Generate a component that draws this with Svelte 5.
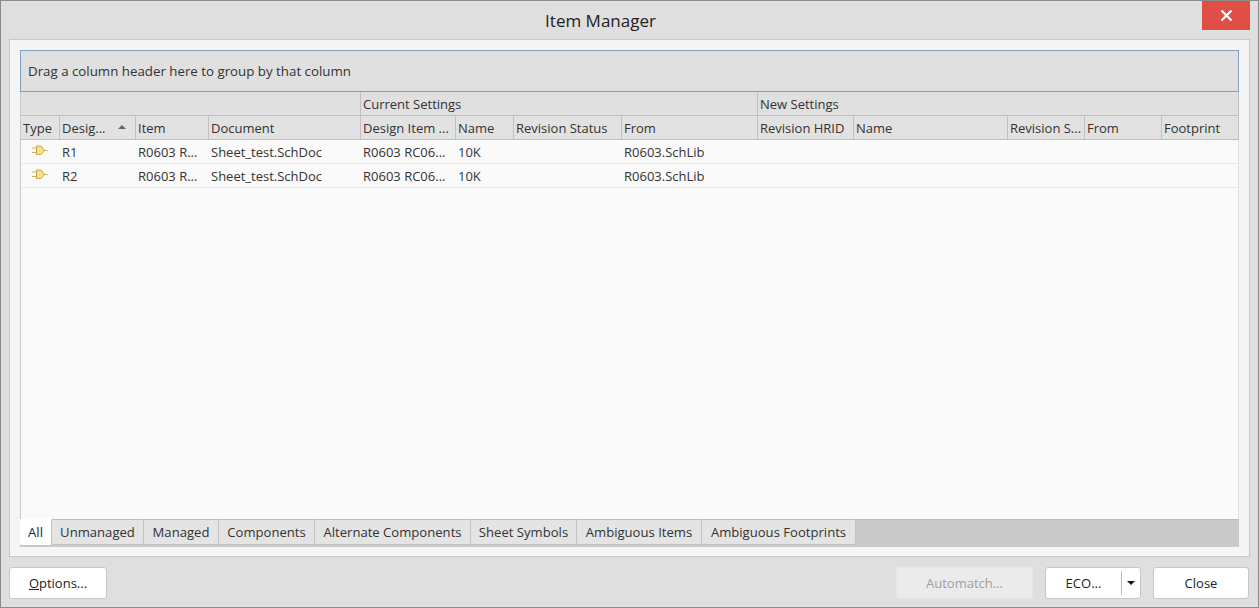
<script lang="ts">
  const columns = [
    { label: "Type", width: 39 },
    { label: "Desig...", width: 76, sorted: true },
    { label: "Item", width: 73 },
    { label: "Document", width: 152 },
    { label: "Design Item ...", width: 95 },
    { label: "Name", width: 58 },
    { label: "Revision Status", width: 108 },
    { label: "From", width: 136 },
    { label: "Revision HRID", width: 96 },
    { label: "Name", width: 154 },
    { label: "Revision S...", width: 77 },
    { label: "From", width: 77 },
    { label: "Footprint", width: 77 },
  ];

  const bands = [
    { label: "", span: 4 },
    { label: "Current Settings", span: 4 },
    { label: "New Settings", span: 5 },
  ];

  const rows = [
    ["", "R1", "R0603 R...", "Sheet_test.SchDoc", "R0603 RC06...", "10K", "", "R0603.SchLib", "", "", "", "", ""],
    ["", "R2", "R0603 R...", "Sheet_test.SchDoc", "R0603 RC06...", "10K", "", "R0603.SchLib", "", "", "", "", ""],
  ];

  const tabs = [
    { label: "All", width: 32 },
    { label: "Unmanaged", width: 92 },
    { label: "Managed", width: 75 },
    { label: "Components", width: 96 },
    { label: "Alternate Components", width: 156 },
    { label: "Sheet Symbols", width: 106 },
    { label: "Ambiguous Items", width: 125 },
    { label: "Ambiguous Footprints", width: 154 },
  ];

  let active = $state("All");
  const gridTemplate = columns.map((c) => c.width + "px").join(" ");
</script>

<div class="window">
  <header class="titlebar">
    <span class="title">Item Manager</span>
    <button class="close-x" aria-label="Close">
      <svg width="13" height="13" viewBox="0 0 13 13">
        <path d="M1.5 1.5 L11.5 11.5 M11.5 1.5 L1.5 11.5" stroke="#fff" stroke-width="2.2" fill="none" />
      </svg>
    </button>
  </header>

  <main class="panel">
    <div class="group-box">Drag a column header here to group by that column</div>

    <div class="grid" style="grid-template-columns: {gridTemplate}">
      {#each bands as band}
        <div class="band" style="grid-column: span {band.span}">{band.label}</div>
      {/each}
      {#each columns as col}
        <div class="head">
          <span>{col.label}</span>
          {#if col.sorted}
            <svg class="sort" width="8" height="4" viewBox="0 0 8 4"><path d="M4 0 L8 4 L0 4 Z" fill="#666" /></svg>
          {/if}
        </div>
      {/each}
      {#each rows as row}
        {#each row as cell, i}
          <div class="cell">
            {#if i === 0}
              <svg class="part" width="16" height="11" viewBox="0 0 16 11">
                <path d="M0 3 H4 M0 7.5 H4 M12 5.5 H15.5" stroke="#cdb05a" stroke-width="1" fill="none" />
                <path d="M4.5 1 H9 L12 4.5 V6 L9 9.5 H4.5 Z" fill="#f5e08e" stroke="#c9a94a" stroke-width="1" />
              </svg>
            {:else}
              {cell}
            {/if}
          </div>
        {/each}
      {/each}
    </div>

    <div class="spacer"></div>

    <nav class="tabs">
      {#each tabs as tab}
        <button
          class="tab"
          class:active={active === tab.label}
          style="width: {tab.width}px"
          onclick={() => (active = tab.label)}
        >{tab.label}</button>
      {/each}
    </nav>
  </main>

  <footer class="actions">
    <button class="btn options"><u>O</u>ptions...</button>
    <div class="right">
      <button class="btn automatch" disabled>Automatch...</button>
      <div class="btn split">
        <span class="split-label">ECO...</span>
        <span class="split-arrow">
          <svg width="8" height="4" viewBox="0 0 8 4"><path d="M0 0 H8 L4 4 Z" fill="#111" /></svg>
        </span>
      </div>
      <button class="btn close">Close</button>
    </div>
  </footer>
</div>

<style>
  :global(body) {
    margin: 0;
    background: #dfdfdf;
  }

  .window {
    box-sizing: border-box;
    width: 1259px;
    height: 608px;
    display: flex;
    flex-direction: column;
    background: #dfdfdf;
    border: 1px solid #8c8c8c;
    font-family: "Open Sans", "Noto Sans", sans-serif;
    font-size: 13px;
    color: #333;
  }

  button {
    font: inherit;
    color: inherit;
    padding: 0;
    margin: 0;
  }

  .titlebar {
    height: 38px;
    flex: none;
    display: flex;
    align-items: flex-start;
    padding-right: 8px;
  }

  .title {
    flex: 1;
    text-align: center;
    margin: 9px 2px 0 0;
    font-size: 17px;
    line-height: 22px;
    color: #222;
  }

  .close-x {
    flex: none;
    width: 48px;
    height: 29px;
    border: none;
    background: #e04e45;
    display: flex;
    align-items: center;
    justify-content: center;
  }

  .panel {
    box-sizing: border-box;
    flex: none;
    height: 518px;
    margin: 0 8px;
    padding: 10px 10px 9px;
    background: #f5f5f5;
    border: 1px solid #c8c8c8;
    display: flex;
    flex-direction: column;
  }

  .group-box {
    box-sizing: border-box;
    flex: none;
    height: 42px;
    padding-left: 7px;
    line-height: 40px;
    font-size: 13.3px;
    background: #e0e0e0;
    border: 1px solid #7f9fbc;
    color: #333;
  }

  .grid {
    display: grid;
    flex: none;
    width: 1219px;
    grid-auto-rows: 24px;
    border-left: 1px solid #c8c8c8;
    box-sizing: border-box;
    background: #fafafa;
  }

  .band,
  .head {
    box-sizing: border-box;
    padding: 1px 0 0 2px;
    line-height: 22px;
    background: #e0e0e0;
    border-right: 1px solid #c0c0c0;
    border-bottom: 1px solid #c0c0c0;
    white-space: nowrap;
    overflow: hidden;
  }

  .head {
    position: relative;
    background: #e2e2e2;
  }

  .sort {
    position: absolute;
    left: 58px;
    top: 9px;
  }

  .cell {
    box-sizing: border-box;
    padding: 1px 0 0 2px;
    line-height: 22px;
    border-bottom: 1px solid #e6e6e6;
    white-space: nowrap;
    overflow: hidden;
    background: #fafafa;
    position: relative;
  }

  .cell:nth-child(13n + 3) {
    border-right: 1px solid #e0e0e0;
  }

  .part {
    position: absolute;
    left: 11px;
    top: 5px;
  }

  .spacer {
    flex: 1;
    background: #fafafa;
    border-left: 1px solid #c8c8c8;
    border-right: 1px solid #e0e0e0;
  }

  .tabs {
    flex: none;
    height: 28px;
    display: flex;
    align-items: flex-start;
    background: #c9c9c9;
    border-top: 1px solid #bdbdbd;
    box-sizing: border-box;
  }

  .tab {
    box-sizing: border-box;
    height: 26px;
    margin-top: -1px;
    border: none;
    border-right: 1px solid #c4c4c4;
    border-top: 1px solid #bdbdbd;
    border-bottom: 1px solid #c4c4c4;
    border-radius: 0 0 2px 2px;
    background: #e4e4e4;
    font-size: 13.1px;
    text-align: center;
    white-space: nowrap;
  }

  .tab.active {
    background: #fff;
    border-top-color: #fff;
    border-bottom-color: #fff;
    color: #222;
  }

  .actions {
    flex: 1;
    display: flex;
    justify-content: space-between;
    padding: 10px 9px 0 8px;
  }

  .right {
    display: flex;
    gap: 12px;
  }

  .btn {
    box-sizing: border-box;
    height: 32px;
    background: #fff;
    border: 1px solid #c6c6c6;
    border-radius: 3px;
    color: #222;
    font-size: 13px;
  }

  .options {
    width: 98px;
  }

  .automatch {
    width: 137px;
    background: #ebebeb;
    border-color: #e6e6e6;
    color: #a0a0a0;
  }

  .split {
    width: 96px;
    display: flex;
    align-items: center;
  }

  .split-label {
    width: 75px;
    text-align: center;
    line-height: 24px;
    border-right: 1px solid #bdbdbd;
  }

  .split-arrow {
    flex: 1;
    display: flex;
    align-items: center;
    justify-content: center;
  }

  .close {
    width: 96px;
  }
</style>
